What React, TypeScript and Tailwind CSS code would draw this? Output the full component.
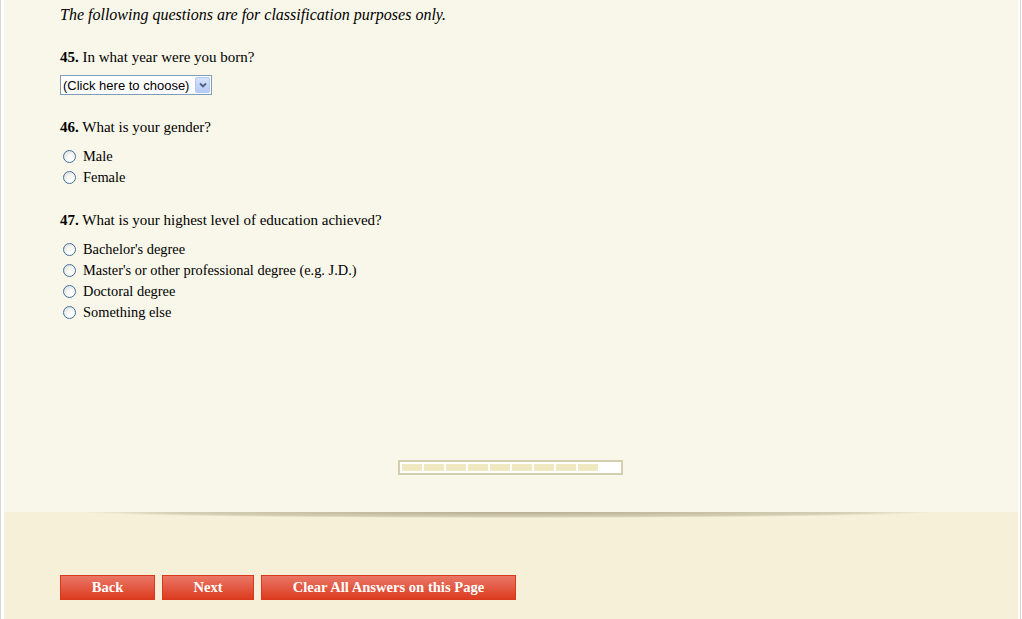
import React from "react";

const serif = "font-['Liberation_Serif','Times_New_Roman',serif]";

function Radio({ label }: { label: string }) {
  return (
    <label className="flex items-center h-[21px]">
      <span className="ml-[3px] w-[13px] h-[13px] rounded-full border border-[#41709f] bg-[radial-gradient(circle_at_65%_70%,#ffffff_25%,#d6d6ce_100%)] shrink-0" />
      <span className="ml-[7px] text-[14.4px] leading-none text-black">{label}</span>
    </label>
  );
}

function Question({ num, text }: { num: string; text: string }) {
  return (
    <div className="text-[15px] leading-[15px] text-black">
      <span className="font-bold">{num}</span> {text}
    </div>
  );
}

function Btn({ label, w }: { label: string; w: string }) {
  return (
    <button
      className={`${w} h-[25px] border border-[#d9381b] bg-[linear-gradient(to_bottom,#ea7766,#dc3c20)] text-white font-bold text-[14.6px] leading-none ${serif}`}
    >
      {label}
    </button>
  );
}

export default function App() {
  return (
    <div className={`flex bg-white w-[1022px] h-[619px] overflow-hidden ${serif}`}>
      <div className="w-px bg-[#d6d6d6]" />
      <div className="w-[3px]" />
      <div className="flex-1 flex flex-col">
        <div className="h-[512px] bg-[#f9f7ea] pl-[56px] flex flex-col">
          <div className="pt-[7px] italic text-[16px] leading-[16px] text-black">
            The following questions are for classification purposes only.
          </div>
          <div className="mt-[27px]">
            <Question num="45." text="In what year were you born?" />
          </div>
          <div className="mt-[10px] flex">
            <div className="flex items-center w-[152px] h-[20px] border border-[#7f9db9] bg-white font-['Liberation_Sans',Arial,sans-serif] text-[13px] text-black">
              <span className="pl-[2px] flex-1 leading-none">(Click here to choose)</span>
              <span className="w-[15px] h-[16px] mr-px rounded-[2px] bg-[linear-gradient(to_bottom,#d6e2fc,#b7cbf6)] border border-[#b4c8f4] flex items-center justify-center">
                <svg width="8" height="6" viewBox="0 0 8 6">
                  <path d="M1 1.5 L4 4.5 L7 1.5" stroke="#4d6185" strokeWidth="1.8" fill="none" />
                </svg>
              </span>
            </div>
          </div>
          <div className="mt-[25px]">
            <Question num="46." text="What is your gender?" />
          </div>
          <div className="mt-[11px] flex flex-col">
            <Radio label="Male" />
            <Radio label="Female" />
          </div>
          <div className="mt-[25px]">
            <Question num="47." text="What is your highest level of education achieved?" />
          </div>
          <div className="mt-[11px] flex flex-col">
            <Radio label="Bachelor's degree" />
            <Radio label="Master's or other professional degree (e.g. J.D.)" />
            <Radio label="Doctoral degree" />
            <Radio label="Something else" />
          </div>
          <div className="flex-1" />
          <div className="flex justify-start pl-[338px] mb-[37px]">
            <div className="w-[225px] h-[15px] border-2 border-[#d3cead] bg-white flex items-center pl-[2px] gap-[2px]">
              {Array.from({ length: 9 }).map((_, i) => (
                <div key={i} className="w-[20px] h-[7px] bg-[#efe8c1]" />
              ))}
            </div>
          </div>
        </div>
        <div className="flex-1 bg-[#f5f0d7] flex flex-col">
          <div className="h-[6px] ml-[78px] mr-[82px] bg-[radial-gradient(ellipse_50%_100%_at_50%_0%,rgba(140,130,100,0.6),rgba(140,130,100,0.3)_80%,transparent_100%)]" />
          <div className="mt-[57px] pl-[56px] flex gap-[7px]">
            <Btn label="Back" w="w-[95px]" />
            <Btn label="Next" w="w-[92px]" />
            <Btn label="Clear All Answers on this Page" w="w-[255px]" />
          </div>
        </div>
      </div>
      <div className="w-[2px]" />
      <div className="w-px bg-[#d6d6d6]" />
      <div className="w-px" />
    </div>
  );
}
